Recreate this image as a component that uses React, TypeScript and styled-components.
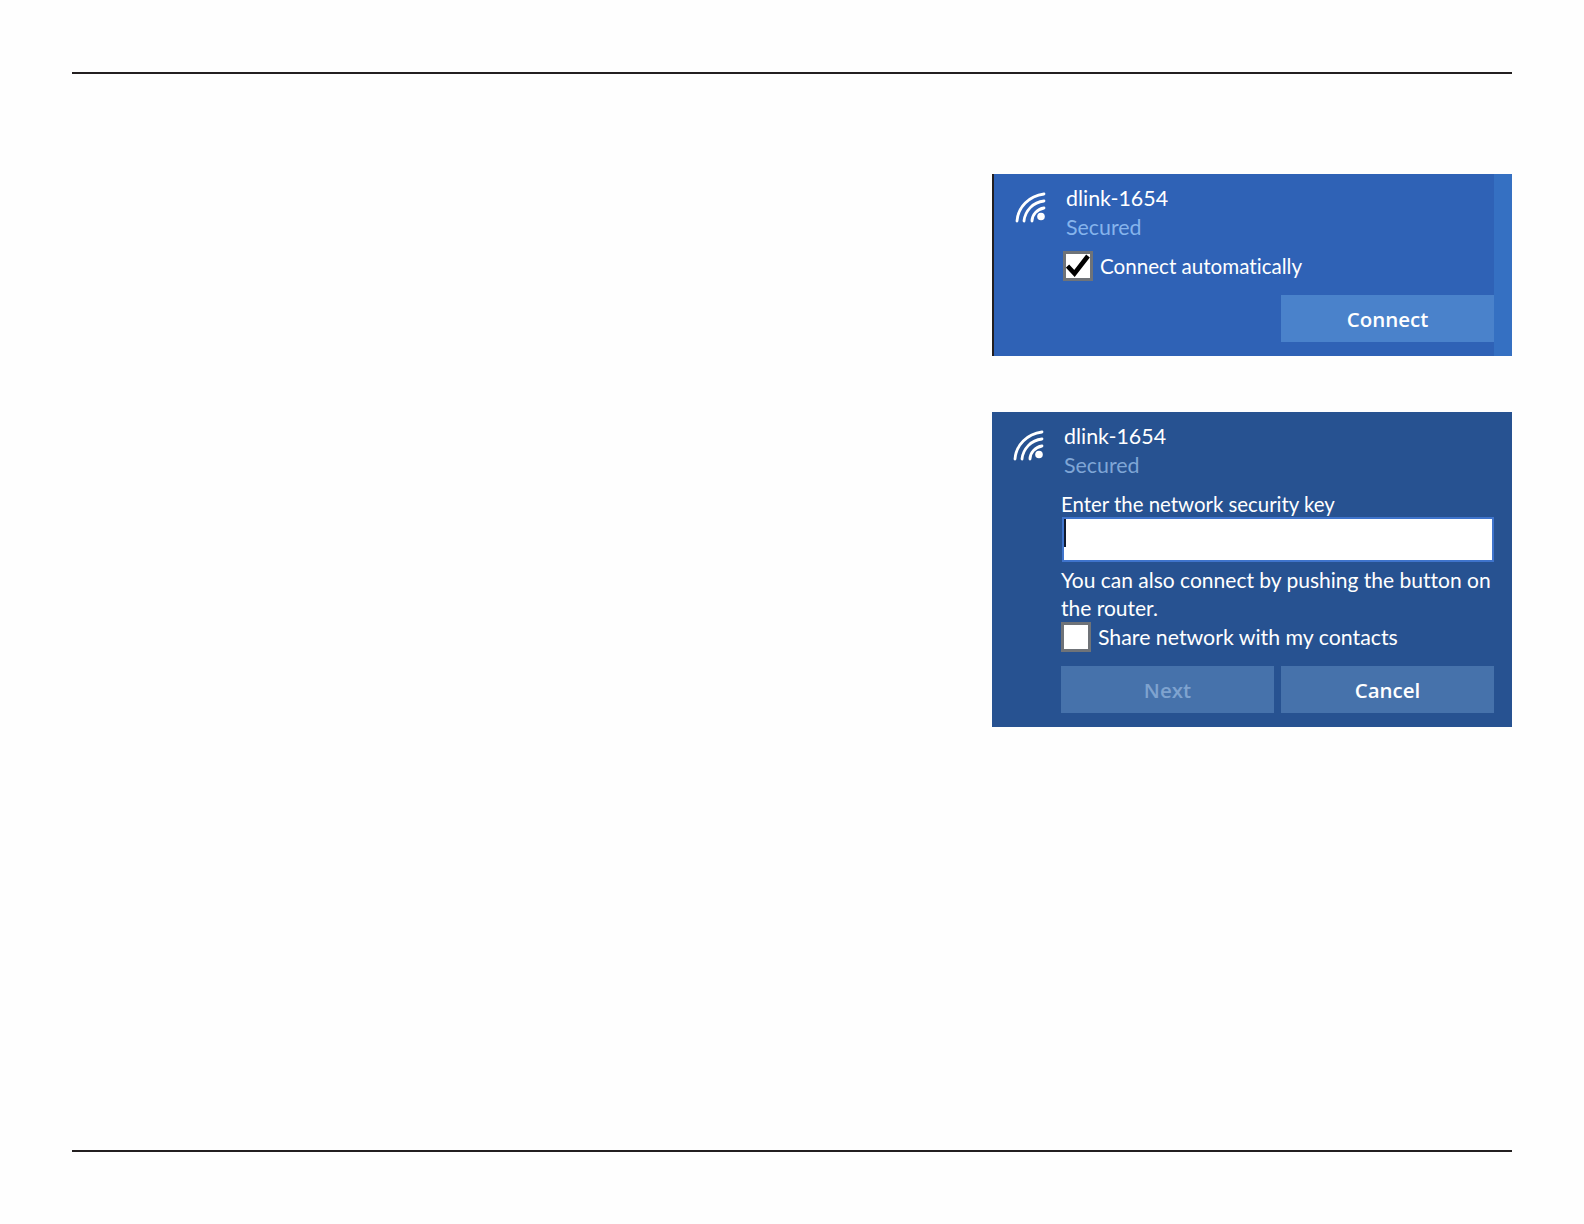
import React from 'react';
import styled, { createGlobalStyle } from 'styled-components';

const GlobalStyle = createGlobalStyle`
    html, body {
        margin: 0;
        padding: 0;
        background: #fefefe;
        font-family: "Lato", "Open Sans", sans-serif;
        font-variant-ligatures: none;
    }
`;

const Page = styled.div`
    height: 1224px;
    padding: 72px 72px 0;
    box-sizing: border-box;
    display: flex;
    flex-direction: column;
`;

const Rule = styled.div`
    height: 2px;
    background-color: #231f20;
`;

const BottomGap = styled.div`
    height: 72px;
`;

const Panels = styled.div`
    flex: 1;
    padding-top: 100px;
    display: flex;
    flex-direction: column;
    align-items: flex-end;
    gap: 56px;
`;

const Panel = styled.div<{ $bg: string; $edge?: boolean }>`
    width: 520px;
    box-sizing: border-box;
    display: flex;
    background-color: ${(p) => p.$bg};
    border-left: ${(p) => (p.$edge ? '2px solid #231f20' : 'none')};
    padding-top: 10px;
    color: #fff;
`;

const IconCol = styled.div`
    width: 72px;
    flex: none;
    padding: 8px 0 0 21px;
    box-sizing: border-box;
`;

const Body = styled.div`
    flex: 1;
    min-width: 0;
`;

const Name = styled.div`
    font-size: 21.4px;
    line-height: 29px;
`;

const Secured = styled.div<{ $color: string }>`
    font-size: 21.4px;
    line-height: 29px;
    color: ${(p) => p.$color};
`;

const CheckRow = styled.div<{ $top: number; $bottom?: number; $size: number }>`
    display: flex;
    align-items: center;
    gap: 7px;
    margin: ${(p) => p.$top}px 0 ${(p) => p.$bottom || 0}px -3px;
    font-size: ${(p) => p.$size}px;
    line-height: 30px;
`;

const CheckBox = styled.div`
    width: 30px;
    height: 30px;
    flex: none;
    box-sizing: border-box;
    border: 3px solid #6f7378;
    background: #fff;
    display: flex;
    align-items: center;
    justify-content: center;
`;

const Label = styled.div<{ $top?: number; $size: number }>`
    font-size: ${(p) => p.$size}px;
    line-height: 28px;
    margin: ${(p) => p.$top || 0}px 14px 0 -3px;
`;

const KeyInput = styled.div`
    height: 45px;
    box-sizing: border-box;
    margin: -1px 18px 4px -2px;
    border: 2px solid #3f74cc;
    background: #fff;
`;

const Caret = styled.div`
    width: 2px;
    height: 28px;
    background-color: #111a2e;
`;

const ButtonRow = styled.div<{ $top: number; $right: number }>`
    display: flex;
    justify-content: flex-end;
    gap: 7px;
    margin: ${(p) => p.$top}px ${(p) => p.$right}px 14px -3px;
`;

const ActionButton = styled.div<{ $bg: string; $color?: string }>`
    width: 213px;
    height: 47px;
    flex: none;
    background-color: ${(p) => p.$bg};
    color: ${(p) => p.$color || '#fff'};
    font-family: "Open Sans", sans-serif;
    font-size: 20.5px;
    font-weight: 600;
    display: flex;
    align-items: center;
    justify-content: center;
`;

const RightStrip = styled.div`
    width: 18px;
    flex: none;
    margin-top: -10px;
    background-color: #3570c2;
`;

const WifiIcon = () => (
    <svg width="34" height="32" viewBox="0 0 34 32" fill="none" stroke="#fff" strokeWidth="2.8" strokeLinecap="round">
        <path d="M2 29 C3 15 14 4 29 2" />
        <path d="M9 29 C10 19 18 10 29 9" />
        <path d="M17 29 C17 23 22 17 29 16" />
        <circle cx="26" cy="24.5" r="3.8" fill="#fff" stroke="none" />
    </svg>
);

const CheckMark = () => (
    <svg width="24" height="24" viewBox="0 0 24 24" fill="none" stroke="#000" strokeWidth="4.6">
        <path d="M1.5 12 L8.5 19.5 L22 2" />
    </svg>
);

export default function App() {
    return (
        <Page>
            <GlobalStyle />
            <Rule />
            <Panels>
                <Panel $bg="#2f62b6" $edge>
                    <IconCol>
                        <WifiIcon />
                    </IconCol>
                    <Body>
                        <Name>dlink-1654</Name>
                        <Secured $color="#86b4ec">Secured</Secured>
                        <CheckRow $top={9} $bottom={14} $size={20.6}>
                            <CheckBox>
                                <CheckMark />
                            </CheckBox>
                            Connect automatically
                        </CheckRow>
                        <ButtonRow $top={0} $right={0}>
                            <ActionButton $bg="#4a82cb">Connect</ActionButton>
                        </ButtonRow>
                    </Body>
                    <RightStrip />
                </Panel>
                <Panel $bg="#275291">
                    <IconCol>
                        <WifiIcon />
                    </IconCol>
                    <Body>
                        <Name>dlink-1654</Name>
                        <Secured $color="#7fa6d6">Secured</Secured>
                        <Label $top={10} $size={20.4}>Enter the network security key</Label>
                        <KeyInput>
                            <Caret />
                        </KeyInput>
                        <Label $size={21}>You can also connect by pushing the button on the router.</Label>
                        <CheckRow $top={0} $size={21.3}>
                            <CheckBox />
                            Share network with my contacts
                        </CheckRow>
                        <ButtonRow $top={14} $right={18}>
                            <ActionButton $bg="#4672ab" $color="#7fa3cf">Next</ActionButton>
                            <ActionButton $bg="#4672ab">Cancel</ActionButton>
                        </ButtonRow>
                    </Body>
                </Panel>
            </Panels>
            <Rule />
            <BottomGap />
        </Page>
    );
}
